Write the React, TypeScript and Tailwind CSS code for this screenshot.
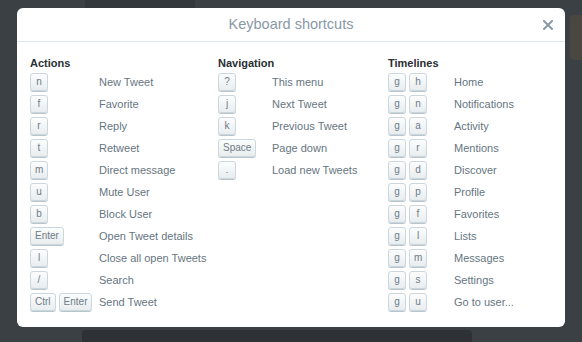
import React from "react";

type Shortcut = { keys: string[]; label: string };

const actions: Shortcut[] = [
  { keys: ["n"], label: "New Tweet" },
  { keys: ["f"], label: "Favorite" },
  { keys: ["r"], label: "Reply" },
  { keys: ["t"], label: "Retweet" },
  { keys: ["m"], label: "Direct message" },
  { keys: ["u"], label: "Mute User" },
  { keys: ["b"], label: "Block User" },
  { keys: ["Enter"], label: "Open Tweet details" },
  { keys: ["l"], label: "Close all open Tweets" },
  { keys: ["/"], label: "Search" },
  { keys: ["Ctrl", "Enter"], label: "Send Tweet" },
];

const navigation: Shortcut[] = [
  { keys: ["?"], label: "This menu" },
  { keys: ["j"], label: "Next Tweet" },
  { keys: ["k"], label: "Previous Tweet" },
  { keys: ["Space"], label: "Page down" },
  { keys: ["."], label: "Load new Tweets" },
];

const timelines: Shortcut[] = [
  { keys: ["g", "h"], label: "Home" },
  { keys: ["g", "n"], label: "Notifications" },
  { keys: ["g", "a"], label: "Activity" },
  { keys: ["g", "r"], label: "Mentions" },
  { keys: ["g", "d"], label: "Discover" },
  { keys: ["g", "p"], label: "Profile" },
  { keys: ["g", "f"], label: "Favorites" },
  { keys: ["g", "l"], label: "Lists" },
  { keys: ["g", "m"], label: "Messages" },
  { keys: ["g", "s"], label: "Settings" },
  { keys: ["g", "u"], label: "Go to user..." },
];

function Key({ k }: { k: string }) {
  return (
    <span className="inline-flex h-[18px] min-w-[18px] items-center justify-center rounded-[3px] border border-[#ccd6dd] bg-gradient-to-b from-[#fcfdfd] to-[#e8edf0] px-1 text-[10px] leading-none text-[#6f7c86] shadow-[0_1px_0_#b9c5cd]">
      {k}
    </span>
  );
}

function Column({
  title,
  items,
  width,
  keyArea,
  gap,
}: {
  title: string;
  items: Shortcut[];
  width: string;
  keyArea: string;
  gap: string;
}) {
  return (
    <div className={width}>
      <h3 className="h-[15px] text-[11px] font-bold leading-[15px] text-[#292f33]">
        {title}
      </h3>
      <ul>
        {items.map((s) => (
          <li key={s.label} className="flex h-[22px] items-center">
            <div className={`flex ${keyArea} ${gap}`}>
              {s.keys.map((k, i) => (
                <Key key={i} k={k} />
              ))}
            </div>
            <span className="text-[11px] text-[#66757f]">{s.label}</span>
          </li>
        ))}
      </ul>
    </div>
  );
}

export default function App() {
  return (
    <div
      className="relative h-[342px] w-[582px] overflow-hidden bg-[#3b4045]"
      style={{ fontFamily: '"Liberation Sans", Arial, sans-serif' }}
    >
      {/* faint page content behind the overlay */}
      <div className="absolute left-[85px] top-0 h-[9px] w-[110px] bg-[#33383c]" />
      <div className="absolute right-0 top-[15px] h-[45px] w-[12px] rounded-l bg-[#4a4741]" />
      <div className="absolute left-[82px] top-[330px] h-[12px] w-[390px] rounded-t bg-[#2e3236]" />

      <div className="absolute left-[17px] top-[8px] h-[319px] w-[548px] rounded-[6px] bg-white">
        <div className="relative flex h-[34px] items-center justify-center border-b border-[#e1e8ed]">
          <h2 className="text-[14.5px] text-[#8899a6]">Keyboard shortcuts</h2>
          <svg
            className="absolute right-[12px] top-[12px]"
            width="10"
            height="10"
            viewBox="0 0 10 10"
          >
            <path
              d="M1 1 L9 9 M9 1 L1 9"
              stroke="#8899a6"
              strokeWidth="2"
              strokeLinecap="square"
            />
          </svg>
        </div>
        <div className="flex pl-[13px] pt-[14px]">
          <Column title="Actions" items={actions} width="w-[188px]" keyArea="w-[69px]" gap="gap-[3px]" />
          <Column title="Navigation" items={navigation} width="w-[170px]" keyArea="w-[54px]" gap="gap-[4px]" />
          <Column title="Timelines" items={timelines} width="flex-1" keyArea="w-[66px]" gap="gap-[3px]" />
        </div>
      </div>
    </div>
  );
}
